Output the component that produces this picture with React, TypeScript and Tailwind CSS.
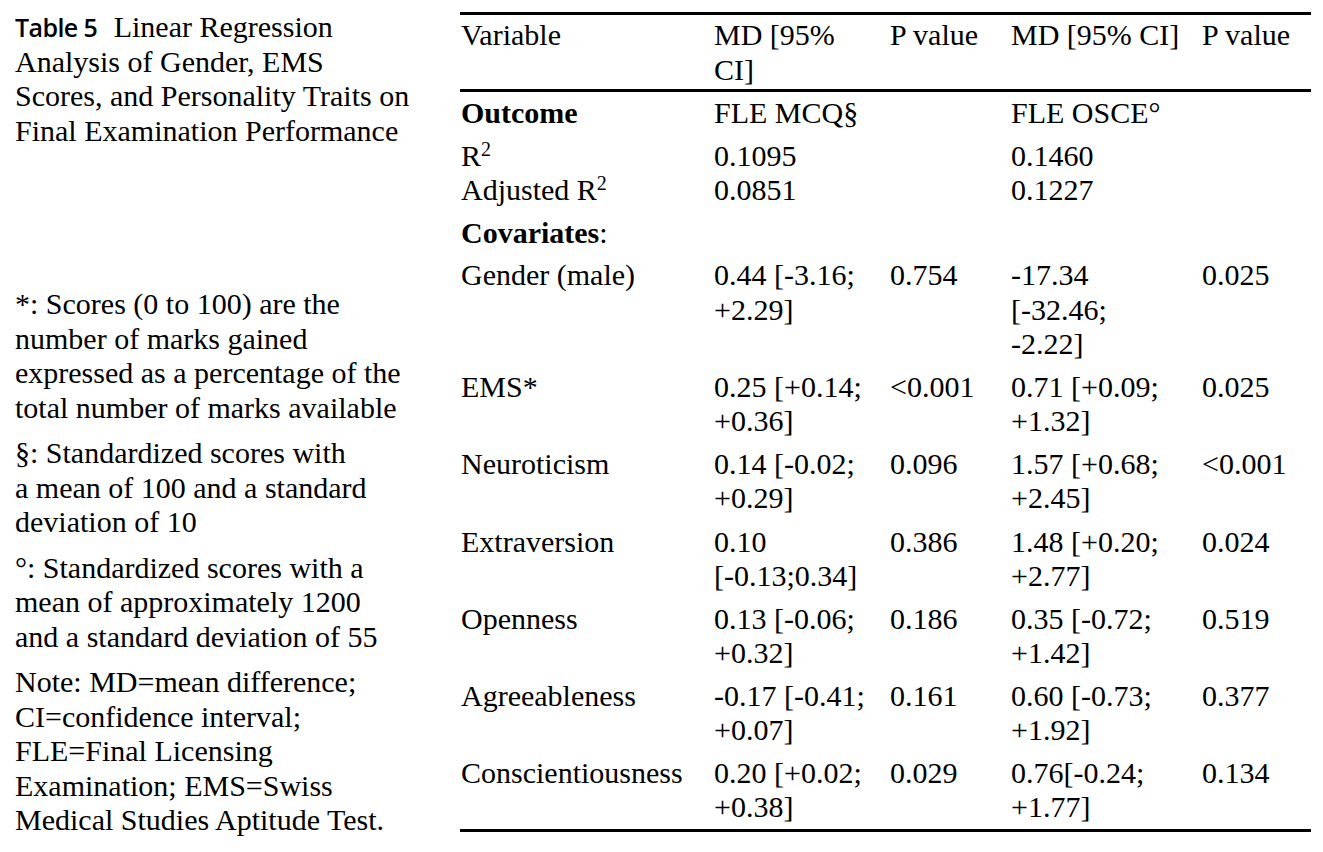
import type { ReactNode } from "react";

type Row = {
  cells: ReactNode[];
  pad?: string;
};

const R2 = () => (
  <>
    R<sup className="text-[20px] top-[-0.5em]">2</sup>
  </>
);

const rows: Row[] = [
  { cells: [<b key="o">Outcome</b>, "FLE MCQ§", "", "FLE OSCE°", ""], pad: "pt-[4px] pb-[4px]" },
  { cells: [<R2 key="r" />, "0.1095", "", "0.1460", ""], pad: "pt-[4px] pb-0" },
  {
    cells: [
      <>
        Adjusted <R2 />
      </>,
      "0.0851",
      "",
      "0.1227",
      "",
    ],
    pad: "pt-0 pb-[4px]",
  },
  {
    cells: [
      <>
        <b>Covariates</b>:
      </>,
      "",
      "",
      "",
      "",
    ],
  },
  { cells: ["Gender (male)", "0.44 [-3.16; +2.29]", "0.754", "-17.34 [-32.46; -2.22]", "0.025"] },
  { cells: ["EMS*", "0.25 [+0.14; +0.36]", "<0.001", "0.71 [+0.09; +1.32]", "0.025"] },
  { cells: ["Neuroticism", "0.14 [-0.02; +0.29]", "0.096", "1.57 [+0.68; +2.45]", "<0.001"] },
  { cells: ["Extraversion", "0.10 [-0.13;0.34]", "0.386", "1.48 [+0.20; +2.77]", "0.024"], pad: "pt-[5px] pb-[4px]" },
  { cells: ["Openness", "0.13 [-0.06; +0.32]", "0.186", "0.35 [-0.72; +1.42]", "0.519"] },
  { cells: ["Agreeableness", "-0.17 [-0.41; +0.07]", "0.161", "0.60 [-0.73; +1.92]", "0.377"] },
  { cells: ["Conscientiousness", "0.20 [+0.02; +0.38]", "0.029", "0.76[-0.24; +1.77]", "0.134"] },
];

const cols = "grid grid-cols-[254px_176px_121px_191px_109px]";
const cellPad = ["pl-[1px] pr-[8px]", "pr-[12px]", "pr-[8px]", "pr-[18px]", "pr-[4px]"];

const Footnote = ({ lines, first }: { lines: string[]; first?: boolean }) => (
  <div className={first ? "" : "mt-[11px]"}>
    {lines.map((l) => (
      <div key={l} className="whitespace-nowrap">
        {l}
      </div>
    ))}
  </div>
);

export default function App() {
  return (
    <div className="min-h-screen w-full bg-white text-black font-['Liberation_Serif',serif] text-[30px] leading-[34.5px]">
      <div className="flex pl-[15px] pt-[12px]">
        {/* Left column: caption and footnotes */}
        <div className="w-[445px] shrink-0">
          <div className="-mt-[2px]">
            <div className="whitespace-nowrap">
              <span className="font-['Open_Sans',sans-serif] font-semibold text-[25px] tracking-[-0.6px]">Table 5</span>{" "}
              <span className="ml-[9px]">Linear Regression</span>
            </div>
            <div className="whitespace-nowrap">Analysis of Gender, EMS</div>
            <div className="whitespace-nowrap">Scores, and Personality Traits on</div>
            <div className="whitespace-nowrap">Final Examination Performance</div>
          </div>

          <div className="mt-[139px]">
            <Footnote
              first
              lines={[
                "*: Scores (0 to 100) are the",
                "number of marks gained",
                "expressed as a percentage of the",
                "total number of marks available",
              ]}
            />
            <Footnote lines={["§: Standardized scores with", "a mean of 100 and a standard", "deviation of 10"]} />
            <Footnote
              lines={["°: Standardized scores with a", "mean of approximately 1200", "and a standard deviation of 55"]}
            />
            <Footnote
              lines={[
                "Note: MD=mean difference;",
                "CI=confidence interval;",
                "FLE=Final Licensing",
                "Examination; EMS=Swiss",
                "Medical Studies Aptitude Test.",
              ]}
            />
          </div>
        </div>

        {/* Right column: table */}
        <div className="w-[851px] shrink-0">
          <div className="border-t-[3px] border-black" />
          <div className={`${cols} pt-[3px] pb-[2px]`}>
            <div className={cellPad[0]}>Variable</div>
            <div className={cellPad[1]}>MD [95% CI]</div>
            <div className={cellPad[2]}>P value</div>
            <div className={cellPad[3]}>MD [95% CI]</div>
            <div className={cellPad[4]}>P value</div>
          </div>
          <div className="border-t-[3px] border-black" />
          {rows.map((r, i) => (
            <div key={i} className={`${cols} ${r.pad ?? "pt-[4px] pb-[4px]"}`}>
              {r.cells.map((c, j) => (
                <div key={j} className={cellPad[j]}>
                  {c}
                </div>
              ))}
            </div>
          ))}
          <div className="border-t-[3px] border-black" />
        </div>
      </div>
    </div>
  );
}
